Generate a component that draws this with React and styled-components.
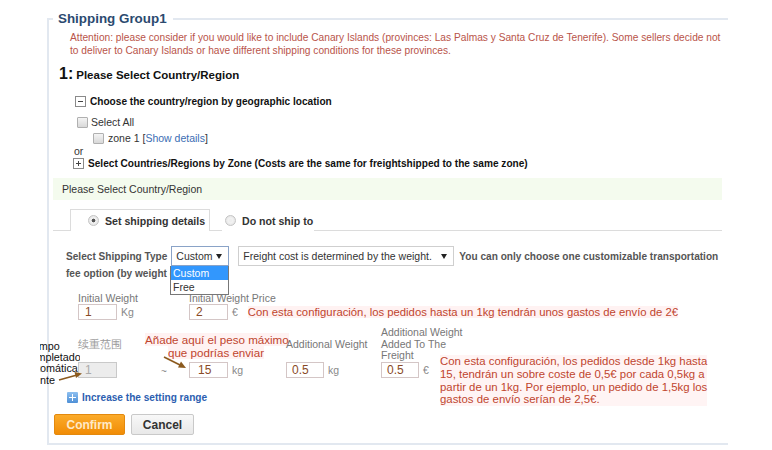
import React from "react";
import styled, { createGlobalStyle } from "styled-components";

const GlobalStyle = createGlobalStyle`
  html, body { margin: 0; padding: 0; background: #fff; }
  body { font-family: "Liberation Sans", Arial, sans-serif; color: #333; }
`;

const Page = styled.div`
  position: relative;
  width: 772px;
  height: 450px;
  overflow: hidden;
  padding-top: 10px;
  box-sizing: border-box;
`;

const Fieldset = styled.fieldset`
  margin: 0 0 0 47px;
  width: 681px;
  box-sizing: border-box;
  border: 2px solid #e2e8f0;
  border-right: none;
  padding: 0 6px 8px 4px;
  min-inline-size: 0;
`;

const Legend = styled.legend`
  padding: 0 6px 0 5px;
  font-size: 13.4px;
  line-height: 18px;
  font-weight: bold;
  color: #2b4a6f;
`;

const Attention = styled.p`
  margin: 3px 0 0 17px;
  font-size: 10.2px;
  line-height: 13px;
  color: #b9544a;
  white-space: nowrap;
`;

const StepTitle = styled.h2`
  margin: 7px 0 0 6px;
  font-size: 11.5px;
  line-height: 20px;
  font-weight: bold;
  color: #111;
  display: flex;
  align-items: baseline;
  gap: 3px;
`;

const StepNum = styled.span`
  font-size: 16px;
`;

const OptionRow = styled.div`
  display: flex;
  align-items: center;
  gap: ${(p) => p.$gap || 3}px;
  margin: ${(p) => p.$mt || 0}px 0 0 ${(p) => p.$ml || 0}px;
  height: 14px;
  font-size: ${(p) => (p.$bold ? "10.1px" : "10.5px")};
  font-weight: ${(p) => (p.$bold ? "bold" : "normal")};
  color: ${(p) => (p.$bold ? "#111" : "#333")};
  white-space: nowrap;
`;

const ToggleBox = styled.span`
  width: 9px;
  height: 9px;
  border: 1px solid #8a8a8a;
  background: #fff;
  position: relative;
  flex: none;
  &::before {
    content: "";
    position: absolute;
    left: 2px;
    right: 2px;
    top: 4px;
    height: 1px;
    background: #444;
  }
  &::after {
    content: "";
    position: absolute;
    top: 2px;
    bottom: 2px;
    left: 4px;
    width: 1px;
    background: #444;
    display: ${(p) => (p.$plus ? "block" : "none")};
  }
`;

const CheckBox = styled.span`
  width: 9px;
  height: 9px;
  border: 1px solid #b0b0b0;
  border-radius: 1px;
  background: linear-gradient(#f4f4f4, #d8d8d8);
  flex: none;
`;

const Link = styled.span`
  color: #3b6db3;
`;

const GreenBar = styled.div`
  margin-top: 8px;
  height: 22px;
  background: #f4fbee;
  display: flex;
  align-items: center;
  padding-left: 9px;
  font-size: 10.5px;
  color: #333;
`;

const Tabs = styled.div`
  margin-top: 8px;
  height: 22px;
  border-bottom: 1px solid #dcdcdc;
  display: flex;
  align-items: flex-end;
  padding-left: 17px;
  gap: 12px;
`;

const Tab = styled.div`
  height: 22px;
  box-sizing: border-box;
  display: flex;
  align-items: center;
  gap: 6px;
  padding: ${(p) => (p.$active ? "0 6px 0 17px" : "0 0 0 2px")};
  width: ${(p) => (p.$active ? "140px" : "auto")};
  border: 1px solid ${(p) => (p.$active ? "#dcdcdc" : "transparent")};
  border-bottom: none;
  background: #fff;
  margin-bottom: -1px;
  font-size: 10.6px;
  font-weight: bold;
  color: #333;
  white-space: nowrap;
`;

const Radio = styled.span`
  width: 9px;
  height: 9px;
  border-radius: 50%;
  border: 1px solid #c4c4c4;
  background: radial-gradient(circle, ${(p) => (p.$on ? "#555 0 1.6px" : "#eee 0 1px")}, #f2f2f2 2.2px, #dedede);
  flex: none;
`;

const Section = styled.div`
  padding-left: 13px;
`;

const TypeRow = styled.div`
  position: relative;
  margin-top: 15px;
  display: flex;
  align-items: center;
  height: 20px;
  font-size: 10.1px;
  font-weight: bold;
  color: #555;
`;

const Select = styled.div`
  position: relative;
  box-sizing: border-box;
  height: 20px;
  width: ${(p) => p.$w}px;
  margin-left: ${(p) => p.$ml}px;
  border: 1px solid ${(p) => (p.$focus ? "#8aa3c7" : "#cfcfcf")};
  background: #fff;
  display: flex;
  align-items: center;
  justify-content: space-between;
  padding: 0 6px 0 4px;
  font-size: 10.5px;
  font-weight: normal;
  color: #333;
`;

const Caret = styled.span`
  width: 0;
  height: 0;
  border-left: 3px solid transparent;
  border-right: 3px solid transparent;
  border-top: 5px solid #222;
`;

const Dropdown = styled.ul`
  position: absolute;
  left: 104px;
  top: 20px;
  width: 57px;
  margin: 0;
  padding: 0;
  list-style: none;
  background: #fff;
  border: 1px solid #777;
  border-top: none;
  z-index: 5;
  font-size: 10.5px;
  font-weight: normal;
`;

const DropItem = styled.li`
  height: 14px;
  line-height: 14px;
  padding-left: 2px;
  background: ${(p) => (p.$sel ? "#3297fd" : "#fff")};
  color: ${(p) => (p.$sel ? "#fff" : "#333")};
`;

const TypeNote = styled.span`
  margin-left: 5px;
  white-space: nowrap;
`;

const TypeNote2 = styled.div`
  line-height: 16px;
  font-size: 10.1px;
  font-weight: bold;
  color: #555;
`;

const WeightGrid = styled.div`
  display: grid;
  grid-template-columns: 111px auto;
  margin: 11px 0 0 12px;
  align-items: end;
`;

const RangeGrid = styled.div`
  display: grid;
  grid-template-columns: 83px 28px 97px 95px 59px auto;
  grid-template-rows: 35px 16px;
  margin: 7px 0 0 12px;
`;

const Cell = styled.div`
  position: relative;
  grid-column: ${(p) => p.$col};
  grid-row: ${(p) => p.$row};
  align-self: ${(p) => p.$align || "center"};
`;

const Field = styled.div`
  display: flex;
  flex-direction: column;
`;

const FieldLabel = styled.div`
  font-size: 10.5px;
  line-height: ${(p) => p.$lh || 13}px;
  color: ${(p) => (p.$light ? "#9a9a9a" : "#777")};
  white-space: nowrap;
`;

const InputLine = styled.div`
  display: flex;
  align-items: center;
  gap: 4px;
  font-size: 10.5px;
  color: #888;
  white-space: nowrap;
`;

const Input = styled.div`
  box-sizing: border-box;
  width: ${(p) => p.$w || 39}px;
  height: 16px;
  border: 1px solid ${(p) => (p.$disabled ? "#c9c9c9" : "#d4c6c6")};
  background: ${(p) => (p.$disabled ? "#ececec" : "#fff")};
  padding-left: ${(p) => p.$pl || 6}px;
  font-size: 12px;
  line-height: 14px;
  color: ${(p) => (p.$disabled ? "#aaa" : "#8a4a26")};
`;

const Note = styled.span`
  font-size: 11.3px;
  color: #c0452e;
  background: #fff2f2;
  margin-left: 6px;
  white-space: nowrap;
`;

const Tilde = styled.span`
  font-size: 10px;
  color: #888;
`;

const Callout = styled.div`
  position: absolute;
  left: -44px;
  top: -12px;
  width: 142px;
  text-align: center;
  font-size: 11.6px;
  line-height: 13.3px;
  color: #c0452e;
  white-space: nowrap;
`;

const Highlight = styled.span`
  background: #fff2f2;
`;

const BigNote = styled.div`
  display: inline-block;
  margin-top: 28px;
  font-size: 11.4px;
  line-height: 12.8px;
  color: #c0452e;
  background: #fff4f4;
  white-space: nowrap;
`;

const AddRange = styled.div`
  display: flex;
  align-items: center;
  gap: 4px;
  margin: 13px 0 0 1px;
  height: 12px;
  font-size: 10.1px;
  font-weight: bold;
  color: #2c5eb0;
`;

const PlusIcon = styled.span`
  width: 11px;
  height: 11px;
  border-radius: 1px;
  background: linear-gradient(#8ec0f0, #4e8fd6);
  position: relative;
  &::before, &::after {
    content: "";
    position: absolute;
    background: #fff;
  }
  &::before { left: 2px; right: 2px; top: 5px; height: 1px; }
  &::after { top: 2px; bottom: 2px; left: 5px; width: 1px; }
`;

const Buttons = styled.div`
  display: flex;
  gap: 6px;
  margin: 11px 0 0 1px;
`;

const Button = styled.button`
  box-sizing: border-box;
  height: 21px;
  width: ${(p) => p.$w}px;
  padding: 0;
  font-family: "Liberation Sans", Arial, sans-serif;
  font-size: 12px;
  font-weight: bold;
  border-radius: 2px;
  border: 1px solid ${(p) => (p.$primary ? "#e3890e" : "#c9c9c9")};
  background: ${(p) =>
    p.$primary ? "linear-gradient(#fbab2a, #f18c06)" : "linear-gradient(#f8f8f8, #e8e8e8)"};
  color: ${(p) => (p.$primary ? "#ffe9c8" : "#333")};
`;

const SideNote = styled.div`
  position: absolute;
  left: 40px;
  top: 341px;
  width: 40px;
  overflow: hidden;
  font-size: 10.8px;
  line-height: 11.2px;
  color: #111;
  white-space: nowrap;
`;

const SideNoteText = styled.div`
  margin-left: -15px;
`;

const Arrows = styled.svg`
  position: absolute;
  left: 0;
  top: 0;
  pointer-events: none;
`;

export default function App() {
  return (
    <Page>
      <GlobalStyle />
      <Fieldset>
        <Legend>Shipping Group1</Legend>
        <Attention>
          Attention: please consider if you would like to include Canary Islands (provinces: Las Palmas y Santa Cruz de Tenerife). Some sellers decide not
          <br />
          to deliver to Canary Islands or have different shipping conditions for these provinces.
        </Attention>
        <StepTitle>
          <StepNum>1:</StepNum> Please Select Country/Region
        </StepTitle>
        <OptionRow $mt={9} $ml={22} $bold $gap={4}>
          <ToggleBox /> Choose the country/region by geographic location
        </OptionRow>
        <OptionRow $mt={7} $ml={24} $gap={0}>
          <CheckBox /> Select All
        </OptionRow>
        <OptionRow $mt={2} $ml={40} $gap={4}>
          <CheckBox />
          <span>
            zone 1 [<Link>Show details</Link>]
          </span>
        </OptionRow>
        <OptionRow $mt={-1} $ml={21}>or</OptionRow>
        <OptionRow $mt={-2} $ml={20} $bold $gap={4}>
          <ToggleBox $plus /> Select Countries/Regions by Zone (Costs are the same for freightshipped to the same zone)
        </OptionRow>
        <GreenBar>Please Select Country/Region</GreenBar>
        <Tabs>
          <Tab $active>
            <Radio $on /> Set shipping details
          </Tab>
          <Tab>
            <Radio /> Do not ship to
          </Tab>
        </Tabs>
        <Section>
          <TypeRow>
            Select Shipping Type
            <Select $w={58} $ml={4} $focus>
              Custom <Caret />
            </Select>
            <Select $w={216} $ml={9}>
              Freight cost is determined by the weight. <Caret />
            </Select>
            <TypeNote>You can only choose one customizable transportation</TypeNote>
            <Dropdown>
              <DropItem $sel>Custom</DropItem>
              <DropItem>Free</DropItem>
            </Dropdown>
          </TypeRow>
          <TypeNote2>fee option (by weight or quantity).</TypeNote2>
          <WeightGrid>
            <Field>
              <FieldLabel $lh={11}>Initial Weight</FieldLabel>
              <InputLine>
                <Input>1</Input> Kg
              </InputLine>
            </Field>
            <Field>
              <FieldLabel $lh={11}>Initial Weight Price</FieldLabel>
              <InputLine>
                <Input>2</Input> €
                <Note>Con esta configuración, los pedidos hasta un 1kg tendrán unos gastos de envío de 2€</Note>
              </InputLine>
            </Field>
          </WeightGrid>
          <RangeGrid>
            <Cell $col={1} $row={1}>
              <FieldLabel $light>续重范围</FieldLabel>
            </Cell>
            <Cell $col={1} $row={2}>
              <Input $disabled>1</Input>
            </Cell>
            <Cell $col={2} $row={2}>
              <Tilde>~</Tilde>
            </Cell>
            <Cell $col={3} $row={1}>
              <Callout>
                <Highlight>Añade aquí el peso máximo</Highlight>
                <br />
                <Highlight>que podrías enviar</Highlight>
              </Callout>
            </Cell>
            <Cell $col={3} $row={2}>
              <InputLine>
                <Input $pl={8}>15</Input> kg
              </InputLine>
            </Cell>
            <Cell $col={4} $row={1}>
              <FieldLabel>Additional Weight</FieldLabel>
            </Cell>
            <Cell $col={4} $row={2}>
              <InputLine>
                <Input $w={38} $pl={5}>0.5</Input> kg
              </InputLine>
            </Cell>
            <Cell $col={5} $row={1}>
              <FieldLabel $lh={11.5}>
                Additional Weight
                <br />
                Added To The
                <br />
                Freight
              </FieldLabel>
            </Cell>
            <Cell $col={5} $row={2}>
              <InputLine>
                <Input $w={38} $pl={5}>0.5</Input> €
              </InputLine>
            </Cell>
            <Cell $col={6} $row="1 / span 2" $align="start">
              <BigNote>
                Con esta configuración, los pedidos desde 1kg hasta
                <br />
                15, tendrán un sobre coste de 0,5€ por cada 0,5kg a
                <br />
                partir de un 1kg. Por ejemplo, un pedido de 1,5kg los
                <br />
                gastos de envío serían de 2,5€.
              </BigNote>
            </Cell>
          </RangeGrid>
          <AddRange>
            <PlusIcon /> Increase the setting range
          </AddRange>
        </Section>
        <Buttons>
          <Button $primary $w={71}>Confirm</Button>
          <Button $w={63}>Cancel</Button>
        </Buttons>
      </Fieldset>
      <SideNote>
        <SideNoteText>
          Campo
          <br />
          completado
          <br />
          automática
          <br />
          mente
        </SideNoteText>
      </SideNote>
      <Arrows width="772" height="450" viewBox="0 0 772 450">
        <g stroke="#8b5a1e" strokeWidth="1.6" fill="#8b5a1e">
          <line x1="164" y1="357" x2="181" y2="365.5" />
          <polygon points="186,368 178,367.5 181,361.5" stroke="none" />
          <line x1="59" y1="380" x2="77" y2="375" />
          <polygon points="82,373.5 76,378 74.5,372" stroke="none" />
        </g>
      </Arrows>
    </Page>
  );
}
